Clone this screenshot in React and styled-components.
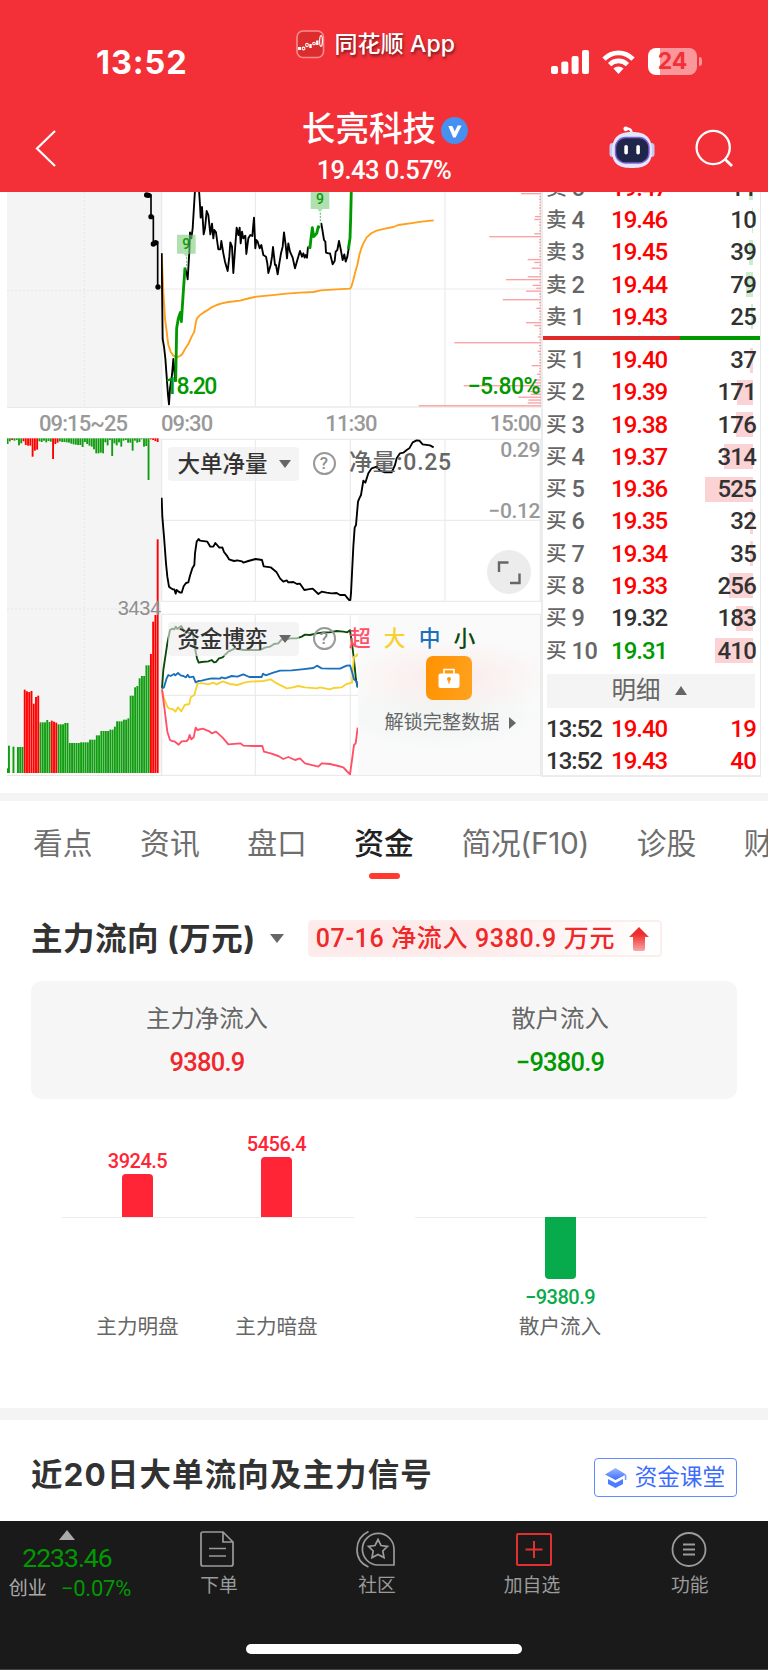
import React from 'react';
import styled, { createGlobalStyle } from 'styled-components';

const Global = createGlobalStyle`
  * { box-sizing: border-box; }
  body {
    margin: 0;
    background: #fff;
    font-family: Roboto, 'Noto Sans CJK SC', sans-serif;
    color: #323232;
  }
`;

const C = { red: '#f33038', up: '#ff0000', down: '#009900', grey: '#666', light: '#999', ink: '#323232' };
const SF = `Inter, 'Noto Sans CJK SC', sans-serif`;

const Page = styled.div`
  width: 768px;
  height: 1670px;
  overflow: hidden;
  display: flex;
  flex-direction: column;
`;

/* ---------- header ---------- */
const Header = styled.header`
  height: 192px;
  flex: none;
  background: ${C.red};
  color: #fff;
  display: flex;
  flex-direction: column;
`;
const StatusBar = styled.div`
  height: 96px;
  display: grid;
  grid-template-columns: 296px 1fr 218px;
  align-items: start;
`;
const Clock = styled.div`
  padding: 43px 0 0 96px;
  font: 700 32.5px/40px ${SF};
  letter-spacing: 0.9px;
`;
const Source = styled.div`
  display: flex;
  align-items: center;
  gap: 9.5px;
  padding-top: 28px;
  height: 60px;
  font: 500 23px/32px ${SF};
  text-shadow: 1px 2px 3px rgba(0, 0, 0, 0.55);
  white-space: nowrap;
  span { letter-spacing: 0.1px; }
`;
const Signals = styled.div`
  display: flex;
  align-items: center;
  gap: 13px;
  padding: 48px 0 0 1px;
`;
const Battery = styled.div`
  width: 49px;
  height: 27px;
  border-radius: 8px;
  background: linear-gradient(90deg, #fff 24%, #f9979b 24%);
  color: ${C.red};
  font: 700 23px/27px ${SF};
  text-align: center;
`;
const Nub = styled.i`
  width: 3px;
  height: 9px;
  margin-left: -11px;
  border-radius: 0 3px 3px 0;
  background: #f9979b;
`;
const NavBar = styled.div`
  flex: 1;
  display: grid;
  grid-template-columns: 280px 1fr 280px;
`;
const NavLeft = styled.div`
  padding: 34px 0 0 35px;
`;
const NavRight = styled.div`
  display: flex;
  justify-content: flex-end;
  align-items: flex-start;
  gap: 40px;
  padding: 29px 34px 0 0;
`;
const Title = styled.div`
  display: flex;
  flex-direction: column;
  align-items: center;
  padding-top: 13px;
`;
const Name = styled.div`
  display: flex;
  align-items: center;
  gap: 5px;
  height: 42px;
  margin-left: 2px;
  font-size: 33.6px;
  font-weight: 500;
  line-height: 42px;
`;
const Quote = styled.div`
  font-size: 25.5px;
  line-height: 30px;
  margin-top: 4px;
  letter-spacing: -0.55px;
  font-weight: 500;
`;

/* ---------- market ---------- */
const Market = styled.section`
  display: flex;
  height: 601px;
  flex: none;
  padding-left: 7px;
`;
const Charts = styled.div`
  display: flex;
  width: 536px;
  height: 585px;
  border-right: 2px solid #ececec;
`;
const Auction = styled.div`
  width: 154px;
  position: relative;
`;
const Minute = styled.div`
  width: 380px;
`;
const Plot = styled.svg`
  display: block;
  width: 100%;
  height: ${(p) => p.$h}px;
  background: ${(p) => p.$bg || '#fff'};
`;
const Times = styled.div`
  height: 30px;
  display: flex;
  justify-content: ${(p) => p.$justify || 'space-between'};
  padding-left: ${(p) => p.$pad || 0}px;
  color: ${C.light};
  font-size: 22px;
  font-weight: 500;
  line-height: 31px;
  letter-spacing: -0.9px;
`;
const Panel = styled.div`
  position: relative;
  height: ${(p) => p.$h}px;
  margin-bottom: ${(p) => p.$mb || 0}px;
`;
const Over = styled.div`
  position: absolute;
  white-space: nowrap;
  left: ${(p) => p.$x}px;
  top: ${(p) => p.$y}px;
  height: ${(p) => p.$lh || 30}px;
  line-height: ${(p) => p.$lh || 30}px;
  font-size: ${(p) => p.$size || 22}px;
  color: ${(p) => p.$color || C.grey};
  font-weight: ${(p) => p.$weight || 400};
  letter-spacing: ${(p) => p.$ls || 0}px;
`;
const RightScale = styled(Over)`
  left: auto;
  right: 1px;
`;
const VolumeMark = styled(Over)`
  left: auto;
  right: 0;
  font-family: 'Liberation Sans', sans-serif;
`;
const Chip = styled.div`
  position: absolute;
  left: 7px;
  top: 8.5px;
  width: 131px;
  height: 34px;
  padding: 0 8px 0 9.5px;
  display: flex;
  align-items: center;
  justify-content: space-between;
  border-radius: 4px;
  background: rgba(236, 236, 236, 0.6);
  color: #333;
  font-size: 22.5px;
  font-weight: 500;
  line-height: 34px;
  white-space: nowrap;
`;
const Caret = styled.i`
  border: ${(p) => p.$w || 6}px solid transparent;
  border-top: ${(p) => p.$t || 8}px solid ${C.grey};
  border-bottom: 0;
`;
const CaretUp = styled.i`
  border: ${(p) => p.$w || 6}px solid transparent;
  border-bottom: ${(p) => p.$t || 9}px solid ${(p) => p.$c || C.grey};
  border-top: 0;
`;
const Help = styled.div`
  position: absolute;
  left: 151.5px;
  top: 14px;
  width: 23px;
  height: 23px;
  border: 2px solid #999;
  border-radius: 50%;
  color: #8c8c8c;
  font-size: 17px;
  font-weight: 500;
  line-height: 19px;
  text-align: center;
`;
const Expand = styled.div`
  position: absolute;
  left: 326px;
  top: 112px;
  width: 44px;
  height: 44px;
  border-radius: 50%;
  background: #ececec;
`;
const Legend = styled.div`
  position: absolute;
  left: 188px;
  top: 10px;
  display: flex;
  gap: 13px;
  font-size: 21.8px;
  line-height: 32px;
  font-weight: 500;
`;
const LegendItem = styled.span`
  color: ${(p) => p.$c};
`;
const Locked = styled.div`
  position: absolute;
  left: 197px;
  top: 2px;
  width: 182px;
  height: 160px;
  padding-top: 41px;
  display: flex;
  flex-direction: column;
  align-items: center;
  background:
    radial-gradient(ellipse 105px 38px at 92px 62px, rgba(251, 234, 232, 0.95), rgba(251, 234, 232, 0)),
    radial-gradient(ellipse 115px 36px at 80px 100px, rgba(238, 244, 242, 0.95), rgba(238, 244, 242, 0)),
    #fafafa;
`;
const LockButton = styled.div`
  width: 46px;
  height: 44px;
  border-radius: 7px;
  background: linear-gradient(100deg, #ff9100, #ffa21f);
  display: flex;
  justify-content: center;
  align-items: center;
`;
const Unlock = styled.div`
  display: flex;
  align-items: center;
  gap: 9px;
  margin: 8px 0 0 2px;
  color: ${C.grey};
  font-size: 19.2px;
  line-height: 30px;
`;
const Play = styled.i`
  border: 6px solid transparent;
  border-left: 7px solid ${C.grey};
  border-right: 0;
`;

const Book = styled.div`
  width: 218px;
  height: 585px;
  overflow: hidden;
  display: flex;
  flex-direction: column;
  border-right: 1px solid #e8e8e8;
  border-bottom: 2px solid #ececec;
`;
const Asks = styled.div`
  height: 144px;
  flex: none;
  display: flex;
  flex-direction: column;
  justify-content: flex-end;
  padding-bottom: 3px;
`;
const Bids = styled.div`
  padding-top: 4px;
`;
const Row = styled.div`
  height: 32.28px;
  flex: none;
  display: grid;
  grid-template-columns: 65px 1fr 80px;
  align-items: center;
  padding: 0 4px 0 3px;
  line-height: 32px;
  font-size: 24px;
  letter-spacing: -1px;
  color: ${C.ink};
`;
const Level = styled.span`
  display: flex;
  gap: 5px;
  color: ${C.grey};
  letter-spacing: 0;
  font-size: 20.6px;
  font-weight: 500;
`;
const LevelNo = styled.b`
  font-size: 23.5px;
  font-weight: 500;
  letter-spacing: -0.5px;
`;
const Price = styled.span`
  color: ${(p) => p.$c};
  font-weight: 500;
`;
const Qty = styled.span`
  text-align: right;
  font-weight: 500;
  letter-spacing: -0.8px;
  color: ${(p) => p.$c || C.ink};
  background: linear-gradient(${(p) => p.$bar}, ${(p) => p.$bar}) no-repeat right 3px center / ${(p) => p.$w || 0}px 25px;
`;
const Ratio = styled.div`
  height: 4px;
  flex: none;
  background: linear-gradient(90deg, #e02a2a 63%, ${C.down} 63%);
`;
const DetailBar = styled.div`
  height: 34px;
  margin: 7px 5px 5px 4px;
  padding-right: 4px;
  display: flex;
  justify-content: center;
  align-items: center;
  gap: 14px;
  background: #f4f4f4;
  color: ${C.grey};
  font-size: 24.5px;
  line-height: 34px;
`;

/* ---------- tabs ---------- */
const Divider = styled.div`
  height: ${(p) => p.$h}px;
  flex: none;
  background: #f4f4f4;
`;
const Tabs = styled.nav`
  height: 88px;
  flex: none;
  display: flex;
  gap: 47.5px;
  padding: 20px 0 0 33px;
  overflow: hidden;
  white-space: nowrap;
`;
const Tab = styled.div`
  display: flex;
  flex-direction: column;
  align-items: center;
  gap: 8px;
  flex: none;
  font-family: ${SF};
  font-size: 29.8px;
  line-height: 44px;
  letter-spacing: ${(p) => p.$ls || 0}px;
  font-weight: ${(p) => (p.$on ? 500 : 400)};
  color: ${(p) => (p.$on ? '#222' : '#6e6e6e')};
  &::after {
    content: '';
    width: 31px;
    height: 6px;
    border-radius: 3px;
    background: ${(p) => (p.$on ? '#ff3b30' : 'transparent')};
  }
`;

/* ---------- capital flow ---------- */
const Flow = styled.section`
  height: 519px;
  flex: none;
  padding: 31px 31px 0;
`;
const FlowHead = styled.div`
  display: flex;
  align-items: center;
  height: 37px;
`;
const H2 = styled.h2`
  margin: 0;
  font: 700 31.5px/40px ${SF};
  letter-spacing: ${(p) => p.$ls || 0}px;
  color: #323232;
  white-space: nowrap;
`;
const FlowTag = styled.div`
  margin-left: 24px;
  width: 354px;
  height: 37px;
  padding: 0 11px 0 6px;
  display: flex;
  align-items: center;
  justify-content: space-between;
  border: 2px solid #fdeeee;
  border-radius: 4px;
  background: linear-gradient(90deg, #fdeaea 45%, #fff);
  color: #f02828;
  font-size: 25px;
  font-weight: 500;
  line-height: 33px;
  letter-spacing: 0.65px;
  white-space: nowrap;
`;
const Summary = styled.div`
  margin-top: 24px;
  height: 118px;
  border-radius: 11px;
  background: #f6f6f6;
  display: grid;
  grid-template-columns: 1fr 1fr;
`;
const Cell = styled.div`
  display: flex;
  flex-direction: column;
  align-items: center;
  padding: 21px 1px 0 0;
  font-size: 24.4px;
  line-height: 34px;
  color: ${C.grey};
`;
const CellValue = styled.div`
  margin-top: 9px;
  font-size: 25.5px;
  font-weight: 500;
  line-height: 34px;
  letter-spacing: -0.8px;
  color: ${(p) => p.$c};
`;
const Bars = styled.div`
  display: grid;
  grid-template-columns: 292px 292px;
  gap: 61px;
  padding: 0 31px;
  height: 270px;
`;
const BarGroup = styled.div`
  display: flex;
  justify-content: center;
  gap: ${(p) => p.$gap || 0}px;
  padding-right: ${(p) => p.$pr || 0}px;
  background: linear-gradient(#ececec, #ececec) no-repeat 0 118px / 100% 1px;
`;
const BarItem = styled.div`
  width: 110px;
  display: flex;
  flex-direction: column;
  align-items: center;
  color: ${(p) => p.$c};
`;
const Half = styled.div`
  height: ${(p) => p.$h}px;
  display: flex;
  flex-direction: column;
  align-items: center;
  justify-content: ${(p) => (p.$down ? 'flex-start' : 'flex-end')};
`;
const Bar = styled.div`
  width: 31px;
  background: currentColor;
  border-radius: ${(p) => (p.$down ? '0 0 4px 4px' : '4px 4px 0 0')};
`;
const BarValue = styled.div`
  font-size: 20px;
  font-weight: 500;
  line-height: 26px;
  letter-spacing: -0.5px;
  margin-top: ${(p) => p.$mt || 0}px;
`;
const BarName = styled.div`
  font-size: 20.6px;
  line-height: 30px;
  color: ${C.grey};
  white-space: nowrap;
`;

/* ---------- signal ---------- */
const Signal = styled.section`
  height: 101px;
  flex: none;
  padding: 16px 31px 0;
  display: flex;
  align-items: flex-start;
  justify-content: space-between;
`;
const SignalTitle = styled.div`
  padding-top: 19px;
`;
const Course = styled.button`
  width: 143px;
  height: 39px;
  margin-top: 22px;
  padding: 0 11px 0 10px;
  display: flex;
  align-items: center;
  justify-content: space-between;
  border: 1px solid #5f8dff;
  border-radius: 4px;
  background: #fff;
  color: #3c6cff;
  font: 400 22.6px/36px Roboto, 'Noto Sans CJK SC', sans-serif;
  white-space: nowrap;
`;

/* ---------- bottom bar ---------- */
const Bottom = styled.footer`
  height: 149px;
  flex: none;
  background: #1a1a1a;
  border-bottom: 1px solid #444;
  display: flex;
  flex-direction: column;
  align-items: center;
  justify-content: space-between;
  padding-bottom: 15px;
`;
const BottomRow = styled.div`
  width: 768px;
  display: grid;
  grid-template-columns: 141px 156px 160px 150px 161px;
`;
const IndexBox = styled.div`
  display: flex;
  flex-direction: column;
  align-items: center;
  padding: 9px 7px 0 0;
  color: ${C.down};
`;
const IndexValue = styled.div`
  font-size: 26.5px;
  font-weight: 400;
  line-height: 34px;
  margin-top: 1px;
  letter-spacing: -1px;
`;
const IndexLine = styled.div`
  display: flex;
  gap: 14px;
  font-size: 22px;
  font-weight: 400;
  line-height: 28px;
  margin: -2px 0 0 6px;
  letter-spacing: -0.2px;
  align-items: center;
  white-space: nowrap;
  small { font-size: 19px; color: #aaa; letter-spacing: 0; line-height: 32px; }
`;
const Item = styled.div`
  display: flex;
  flex-direction: column;
  align-items: center;
  padding-top: 9px;
  color: #9b9b9b;
  font-size: 18.8px;
  line-height: 28px;
  svg { display: block; margin: 0 0 4px ${(p) => p.$shift || 0}px; }
`;
const HomeBar = styled.div`
  width: 276px;
  height: 10px;
  border-radius: 5px;
  background: #fff;
`;

/* ---------- data ---------- */
const asks = [
  ['5', '19.47', 11, 4], ['4', '19.46', 10, 1], ['3', '19.45', 39, 4],
  ['2', '19.44', 79, 7], ['1', '19.43', 25, 2],
];
const bids = [
  ['1', '19.40', 37, 3], ['2', '19.39', 171, 16], ['3', '19.38', 176, 17], ['4', '19.37', 314, 29],
  ['5', '19.36', 525, 48], ['6', '19.35', 32, 3], ['7', '19.34', 35, 3], ['8', '19.33', 256, 24],
  ['9', '19.32', 183, 17, C.ink], ['10', '19.31', 410, 38, C.down],
];

const priceA = '35,205 38,462 42,485 46,520 50,575 54,630 57,658 60,610 66,570 70,522 76,590';
const rallyA = '77,590 80,430 85,400 91,382 94,410 100,320 105,248';
const priceB = '105,248 111,270 113,283 118,200 120,142 124,160 128,130 135,15 147,15 150,60 152,98 156,66 161,148 165,130 170,78 175,90 181,148 186,116 190,160 193,135 198,142 201,165 205,193 211,193 214,168 220,205 225,230 233,258 238,215 241,172 246,185 250,264 256,180 260,128 265,150 269,128 272,175 276,140 280,160 286,152 289,207 295,160 301,150 307,153 309,130 312,98 316,190 319,165 323,170 329,190 334,180 340,210 348,215 352,235 355,264 362,240 366,215 369,186 375,240 378,240 383,268 388,235 393,205 398,185 402,142 407,180 411,220 415,175 420,200 428,218 435,250 442,225 450,198 456,215 460,205 464,218 467,210 471,218 474,185';
const rallyB = '474,185 480,188 483,160 487,128 491,155 500,145 505,125 510,128';
const priceC = '512,118 514,116 518,140 522,165 526,170 528,203 535,205 540,205 548,238 554,228 557,200 562,195 567,168 572,192 578,225 583,208 587,230 592,215 596,190';
const rallyC = '595,192 600,160 602,100 604,15';
const average = '35,205 40,320 45,400 50,440 55,480 62,500 70,512 80,517 90,513 97,507 105,492 115,477 125,455 133,440 137,415 141,400 150,390 160,383 170,377 183,368 200,360 215,355 235,351 270,347 300,339 320,335 360,331 410,326 450,323 490,321 512,316 560,313 600,311 604,305 610,285 616,260 622,240 628,210 634,190 640,175 650,157 665,144 680,137 705,131 730,126 745,120 780,115 815,110 851,106';
const netLine = '35,203 37,260 42,320 48,400 52,440 57,470 62,474 68,478 73,478 77,491 80,480 86,485 91,488 95,488 101,469 108,459 115,457 120,437 127,415 133,405 135,370 140,335 146,327 150,332 172,335 181,350 190,350 196,339 208,353 217,352 222,366 230,376 237,388 252,393 262,391 276,394 280,398 295,393 317,387 336,390 341,409 362,412 380,427 390,445 400,455 410,451 415,457 430,456 441,462 450,461 463,480 474,478 488,476 505,492 515,485 530,488 545,490 560,489 570,495 585,495 593,505 597,510 601,510 603,490 606,430 610,350 614,293 618,285 621,250 624,215 628,205 633,195 640,152 646,158 655,130 665,115 680,110 690,122 705,127 725,127 735,105 740,85 750,70 760,68 770,60 778,55 788,37 800,31 808,32 818,43 840,46 851,52';
const games = [
  ['#0a4a0a', '36,265 40,210 46,170 52,130 60,90 67,86 73,88 77,80 82,87 88,82 94,78 100,90 110,95 120,100 128,95 136,150 141,175 146,188 155,186 175,184 185,180 192,187 198,186 207,175 218,172 223,166 235,155 255,145 280,150 310,150 330,150 345,143 360,140 372,132 385,130 395,118 405,120 420,115 440,115 455,110 465,104 480,105 500,100 520,97 540,97 560,93 580,95 592,97 600,91 606,130 612,180 618,240 623,262'],
  ['#f8d12f', '36,268 42,295 52,320 58,326 68,327 76,335 84,322 94,334 104,315 118,312 122,292 133,285 143,250 160,250 175,253 190,248 200,253 218,244 240,252 262,255 285,247 300,245 340,243 362,238 375,247 400,260 410,265 425,263 445,258 465,262 500,265 510,262 525,265 540,268 550,264 575,262 590,252 606,248 608,215 612,170 620,168 623,160'],
  ['#ff5068', '36,268 44,330 52,395 60,420 66,423 75,425 86,434 95,424 110,423 115,418 119,405 124,418 131,412 137,383 142,390 158,386 178,394 185,400 198,395 218,413 235,433 272,430 280,437 310,438 337,438 342,455 362,460 385,468 400,477 415,471 435,480 450,475 465,490 505,500 515,490 540,492 565,498 580,502 590,513 600,523 606,480 612,435 617,430 623,383'],
  ['#1a70bd', '36,265 42,262 50,235 55,225 62,228 72,222 76,226 84,219 92,226 100,228 108,232 113,224 118,232 130,230 137,247 145,243 155,242 170,238 185,235 210,236 215,232 225,235 245,228 262,230 280,223 298,231 335,231 339,221 347,226 370,218 390,212 425,211 455,208 490,204 501,197 515,205 540,206 570,206 590,197 600,196 606,215 612,238 620,245 623,262'],
];

const spikes = { 0: 60, 8: 18, 9: 20, 14: 20, 15: 155, 23: 40, 24: 20, 26: 28, 29: 40, 30: 105, 32: 25, 33: 14, 34: 45, 37: 115, 40: 14, 45: 45, 46: 20, 50: 10, 52: 260, 55: 10, 60: 28, 63: 12, 65: 20, 66: 18, 67: 232, 68: 24, 69: 34, 70: 30, 71: 68, 72: 38, 73: 40, 74: 367 };
const profile = Array.from({ length: 75 }, (_, k) => [25 + 8.6 * k, spikes[k] || 4 + (k % 3)]);

const G = '#109e10';
const R = '#ff0000';
const volumeSteps = [
  [30, 947, G], [37, 0, G], [44, 950, G], [51, 0, G], [71, 951, G], [78, 779, R], [85, 784, R], [92, 786, R],
  [98, 783, R], [105, 821, R], [112, 801, R], [119, 797, R], [139, 877, G], [146, 870, G], [152, 876, G],
  [159, 872, R], [166, 875, R], [173, 878, R], [194, 883, G], [207, 879, G], [240, 939, G], [265, 937, G],
  [286, 929, G], [299, 916, G], [326, 903, G], [340, 899, G], [347, 890, G], [367, 874, G], [381, 869, G],
  [388, 865, G], [402, 797, G], [409, 772, G], [415, 768, G], [422, 745, G], [436, 738, G], [450, 706, G],
  [456, 672, R], [463, 575, R], [470, 555, R], [478, 328, R],
];
const volumes = Array.from({ length: 67 }, (_, i) => {
  const x = 24 + i * 6.76;
  const [, top, color] = volumeSteps.find(([end]) => x + 3 < end) || [0, 0, G];
  return { x, top, color };
}).filter((v) => v.top);
const unmatched = [
  42, 34, -30, 32, 30, 46, 40, -34, -45, -47, -47, -80, -62, -59, 34, 36, 32, 37, 33, 35, -87, -42, -38, 34, 36, 36,
  37, 38, 41, 43, 44, 45, 45, 51, 36, 42, 47, 50, 58, 70, 70, 68, 70, 37, 46, 30, 78, 40, 46, 37, 50, 32, 30, 38, 38,
  62, 32, 38, 36, 28, 50, 48, 150, -28, -30, -33, -36,
];

/* ---------- drawings ---------- */
const Line = ({ pts, c = '#000', w = 5.6 }) => (
  <polyline points={pts} fill="none" stroke={c} strokeWidth={w} strokeLinejoin="round" />
);

const Grid = ({ top, mid, bottom }) => (
  <g stroke="#ebebeb" strokeWidth="4" fill="none">
    <path d={`M33 ${mid}H1173M316 ${top}V${bottom}M601 ${top}V${bottom}M885 ${top}V${bottom}`} strokeWidth="3.5" />
    <path d={`M35 ${top}V${bottom}H1171V${top}Z`} />
  </g>
);

const Nine = ({ x, y, tail }) => (
  <g>
    <path d={`M${x} ${y}h56v57h-20l-8 10l-8 -10h-20z`} fill="#7cc97c" fillOpacity="0.6" />
    <path d={`M${x + 29} ${y + 68}V${tail}`} stroke="#6fc26f" strokeWidth="3.5" strokeDasharray="6 4" />
    <text x={x + 28} y={y + 43} textAnchor="middle" fontSize="42" fontWeight="500" fontFamily="Roboto" fill="#0a9a0a">9</text>
  </g>
);

const PriceChart = () => (
  <Plot $h={216} viewBox="33 21 1140 648">
    <Grid top={0} mid={312} bottom={666} />
    {profile.map(([y, w]) => <rect key={y} x={1173 - w} y={y - 1} width={w} height="4" fill="#fba0a3" />)}
    <Line pts={average} c="#ff9f1a" />
    <Line pts={priceA} />
    <Line pts={priceB} />
    <Line pts={priceC} />
    <Line pts={rallyA} c="#009a00" w={8.5} />
    <Line pts={rallyB} c="#009a00" w={8.5} />
    <Line pts={rallyC} c="#009a00" w={8.5} />
    <Nine x={81} y={149} tail={248} />
    <Nine x={482} y={15} tail={120} />
  </Plot>
);

const AuctionPrice = () => (
  <Plot $h={216} $bg="#f4f4f4" viewBox="21 21 462 648">
    <path d="M253 21V669M21 317H483" stroke="#e6e6e6" strokeWidth="3" strokeDasharray="6 6" />
    <path d="M21 669H483" stroke="#e6e6e6" strokeWidth="4" />
    <path d="M440 30H453V95H460V175L473 172V305" fill="none" stroke="#000" strokeWidth="5" />
    {[[440, 30], [446, 31], [453, 95], [460, 177], [467, 173], [474, 306]].map(([x, y]) => (
      <circle key={y} cx={x} cy={y} r="8" />
    ))}
  </Plot>
);

const AuctionVolume = () => (
  <Plot $h={338} $bg="#f4f4f4" viewBox="21 24 462 1014">
    <path d="M253 24V1030M21 537H483" stroke="#e6e6e6" strokeWidth="3" strokeDasharray="6 6" />
    {unmatched.map((v, i) => (
      <rect key={i} x={20 + i * 6.82} y="25" width="5.6" height={Math.abs(v) - 25} fill={v < 0 ? R : G} />
    ))}
    <rect x="21" y="1015" width="3" height="14" fill={G} />
    {volumes.map((v) => <rect key={v.x} x={v.x} y={v.top} width="5.7" height={1029 - v.top} fill={v.color} />)}
    <rect x="21" y="1030" width="462" height="8" fill="#fff" />
    <path d="M21 1037H483" stroke="#e6e6e6" strokeWidth="5" />
  </Plot>
);

const AppLogo = () => (
  <svg width="29" height="29" viewBox="0 0 29 29">
    <rect x="1" y="1" width="26.5" height="26.5" rx="6" fill="#dd2c2e" stroke="#f78c8f" strokeWidth="1.6" />
    <path d="M2 18.5h3" stroke="#fff" strokeWidth="3" />
    <path d="M14.5 14v4M21.3 10.5v4.5" stroke="#fff" strokeWidth="2.4" />
    <g fill="none" stroke="#fff" strokeWidth="1.1">
      <circle cx="7.5" cy="18.5" r="1.4" /><ellipse cx="11" cy="15" rx="1.3" ry="1.8" /><circle cx="18" cy="13.5" r="1.3" />
      <ellipse cx="25" cy="11" rx="1.4" ry="5.4" />
    </g>
  </svg>
);

const Cellular = () => (
  <svg width="38" height="25" viewBox="0 0 38 25" fill="#fff">
    <rect x="0" y="17" width="7" height="8" rx="2" /><rect x="10.3" y="12.5" width="7" height="12.5" rx="2" />
    <rect x="20.6" y="7" width="7" height="18" rx="2" /><rect x="31" y="1" width="7" height="24" rx="2" />
  </svg>
);

const Wifi = () => (
  <svg width="33" height="24" viewBox="0 0 33 24" fill="none" stroke="#fff" strokeWidth="4.6">
    <path d="M2 9.2C10 .8 23 .8 31 9.2" />
    <path d="M7.6 14.6C12.6 9.6 20.4 9.6 25.4 14.6" />
    <path d="M16.5 24L11.4 18.6C14.4 15.8 18.6 15.8 21.6 18.6Z" fill="#fff" stroke="none" />
  </svg>
);

const Verified = () => (
  <svg width="27" height="27" viewBox="0 0 27 27">
    <circle cx="13.5" cy="13.5" r="13.4" fill="#4690f0" />
    <path d="M7.3 9H11.3L13.8 14.5L16.6 8.6H20.6L14.6 20.5H12.2Z" fill="#fff" />
  </svg>
);

const Robot = () => (
  <svg width="46" height="44" viewBox="0 0 46 44">
    <path d="M22.5 8C22.5 3 18 3.5 16.5 4.2" fill="none" stroke="#fff" strokeWidth="2.4" />
    <circle cx="16.8" cy="3.8" r="2.4" fill="#fff" />
    <rect x="0.5" y="18" width="6" height="14" rx="3" fill="#c6c8ef" />
    <rect x="39.5" y="18" width="6" height="14" rx="3" fill="#c6c8ef" />
    <path d="M3 26C3 12 10 7 23 7S43 12 43 26S35 43 23 43S3 40 3 26Z" fill="#e6e6fb" />
    <rect x="6.5" y="12.5" width="33.5" height="25.5" rx="10" fill="#20264a" stroke="#7c63d8" strokeWidth="1.4" />
    <rect x="15.3" y="20" width="3.6" height="9.5" rx="1.8" fill="#fff" />
    <rect x="27.3" y="20" width="3.6" height="9.5" rx="1.8" fill="#fff" />
  </svg>
);

const MagnifierIcon = styled.svg`
  margin-top: 4px;
`;
const Magnifier = () => (
  <MagnifierIcon width="39" height="39" viewBox="0 0 39 39" fill="none" stroke="#fff" strokeWidth="2.3">
    <circle cx="18.2" cy="18.5" r="16.6" /><path d="M30.3 30.5L37 37" strokeWidth="2.8" />
  </MagnifierIcon>
);

const HeadCaret = styled(Caret)`
  margin-left: 14px;
`;

const Level10 = ({ side, rows, bar }) => rows.map(([n, price, qty, w, c]) => (
  <Row key={n}>
    <Level>{side}<LevelNo>{n}</LevelNo></Level>
    <Price $c={c || C.up}>{price}</Price>
    <Qty $w={w} $bar={bar}>{qty}</Qty>
  </Row>
));

export default function App() {
  return (
    <Page>
      <Global />
      <Header>
        <StatusBar>
          <Clock>13:52</Clock>
          <Source><AppLogo /><span>同花顺 App</span></Source>
          <Signals><Cellular /><Wifi /><Battery>24</Battery><Nub /></Signals>
        </StatusBar>
        <NavBar>
          <NavLeft>
            <svg width="21" height="37" viewBox="0 0 21 37" fill="none" stroke="#fff" strokeWidth="2.2"><path d="M20 1L2 18.5L20 36" /></svg>
          </NavLeft>
          <Title>
            <Name>长亮科技<Verified /></Name>
            <Quote>19.43 0.57%</Quote>
          </Title>
          <NavRight><Robot /><Magnifier /></NavRight>
        </NavBar>
      </Header>

      <Market>
        <Charts>
          <Auction>
            <AuctionPrice />
            <Times $pad={32}>09:15~25</Times>
            <AuctionVolume />
            <VolumeMark $x={0} $y={401} $size={20} $color="#8f8f8f" $ls={-0.3}>3434</VolumeMark>
          </Auction>
          <Minute>
            <Panel $h={216}>
              <PriceChart />
              <Over $x={4} $y={180} $size={23} $color={C.down} $weight={500} $ls={-1.6}>18.20</Over>
              <RightScale $y={180} $size={23} $color={C.down} $weight={500} $ls={-0.5}>−5.80%</RightScale>
            </Panel>
            <Times><span>09:30</span><span>11:30</span><span>15:00</span></Times>
            <Panel $h={164} $mb={11}>
              <Plot $h={164} viewBox="33 24 1140 492">
                <Grid top={28} mid={271} bottom={514} />
                <Line pts={netLine} />
              </Plot>
              <Chip>大单净量<Caret /></Chip>
              <Help>?</Help>
              <Over $x={188} $y={10} $size={23} $weight={500} $ls={0.75}>净量:0.25</Over>
              <RightScale $y={-3} $size={21} $color={C.light} $weight={500} $ls={-0.5}>0.29</RightScale>
              <RightScale $y={58} $size={21} $color={C.light} $weight={500} $ls={-0.4}>−0.12</RightScale>
              <Expand>
                <svg width="44" height="44" viewBox="0 0 44 44" fill="none" stroke="#666" strokeWidth="2.4"><path d="M12 22V12.5H21.5M23 33H32.5V23.5" /></svg>
              </Expand>
            </Panel>
            <Panel $h={164}>
              <Plot $h={164} viewBox="33 39 1140 492">
                <Grid top={43} mid={286} bottom={526} />
                {games.map(([c, pts]) => <Line key={c} pts={pts} c={c} />)}
              </Plot>
              <Chip>资金博弈<Caret /></Chip>
              <Locked>
                <LockButton>
                  <svg width="22" height="20" viewBox="0 0 22 20"><path d="M6 7V1.5H16V7" fill="none" stroke="#fff" strokeWidth="1.6" /><rect x="0.5" y="5.5" width="21" height="14.5" rx="2" fill="#fff" /><circle cx="11" cy="11" r="2" fill="#ff9808" /><path d="M10.3 11H11.7V15.5H10.3Z" fill="#ff9808" /></svg>
                </LockButton>
                <Unlock>解锁完整数据<Play /></Unlock>
              </Locked>
              <Help>?</Help>
              <Legend>
                <LegendItem $c="#ff5068">超</LegendItem>
                <LegendItem $c="#f8d12f">大</LegendItem>
                <LegendItem $c="#1a70bd">中</LegendItem>
                <LegendItem $c="#0a4a0a">小</LegendItem>
              </Legend>
            </Panel>
          </Minute>
        </Charts>
        <Book>
          <Asks><Level10 side="卖" rows={asks} bar="#cdebcd" /></Asks>
          <Ratio />
          <Bids><Level10 side="买" rows={bids} bar="#fbd3d5" /></Bids>
          <DetailBar>明细<CaretUp /></DetailBar>
          <Row><Price $c={C.ink}>13:52</Price><Price $c={C.up}>19.40</Price><Qty $c={C.up} $bar="transparent">19</Qty></Row>
          <Row><Price $c={C.ink}>13:52</Price><Price $c={C.up}>19.43</Price><Qty $c={C.up} $bar="transparent">40</Qty></Row>
        </Book>
      </Market>

      <Divider $h={8} />
      <Tabs>
        <Tab>看点</Tab><Tab>资讯</Tab><Tab>盘口</Tab><Tab $on>资金</Tab><Tab $ls={-0.3}>简况(F10)</Tab><Tab>诊股</Tab><Tab>财务</Tab>
      </Tabs>

      <Flow>
        <FlowHead>
          <H2 $ls={0.5}>主力流向 (万元)</H2>
          <HeadCaret $w={7.5} $t={9} />
          <FlowTag>
            <span>07-16 净流入 9380.9 万元</span>
            <svg width="20" height="24" viewBox="0 0 20 24">
              <defs><linearGradient id="up" x2="0" y2="1"><stop offset="0.3" stopColor="#ee2e2e" /><stop offset="1" stopColor="#f9a5a5" /></linearGradient></defs>
              <path d="M10 0L20 10H16V22Q16 24 14 24H6Q4 24 4 22V10H0Z" fill="url(#up)" />
            </svg>
          </FlowTag>
        </FlowHead>
        <Summary>
          <Cell>主力净流入<CellValue $c="#f0282d">9380.9</CellValue></Cell>
          <Cell>散户流入<CellValue $c={C.down}>−9380.9</CellValue></Cell>
        </Summary>
        <Bars>
          <BarGroup $gap={29} $pr={2}>
            <BarItem $c="#ff2436">
              <Half $h={118}><BarValue>3924.5</BarValue><Bar style={{ height: 43 }} /></Half>
              <Half $down $h={95} />
              <BarName>主力明盘</BarName>
            </BarItem>
            <BarItem $c="#ff2436">
              <Half $h={118}><BarValue>5456.4</BarValue><Bar style={{ height: 60 }} /></Half>
              <Half $down $h={95} />
              <BarName>主力暗盘</BarName>
            </BarItem>
          </BarGroup>
          <BarGroup $pr={2}>
            <BarItem $c="#08ab4b">
              <Half $h={118} />
              <Half $down $h={95}><Bar $down style={{ height: 62 }} /><BarValue $mt={5}>−9380.9</BarValue></Half>
              <BarName>散户流入</BarName>
            </BarItem>
          </BarGroup>
        </Bars>
      </Flow>

      <Divider $h={12} />
      <Signal>
        <SignalTitle><H2 $ls={1.1}>近20日大单流向及主力信号</H2></SignalTitle>
        <Course>
          <svg width="22" height="20" viewBox="0 0 22 20">
            <defs><linearGradient id="cap" x2="0" y2="1"><stop stopColor="#9db9ff" /><stop offset="1" stopColor="#3c6cff" /></linearGradient></defs>
            <path d="M10.5 0L21 6.5L10.5 12L0 6.5Z" fill="url(#cap)" /><path d="M3 11L10.5 15L18 11V16L10.5 20L3 16Z" fill="#4f7dff" /><path d="M20.6 7V12" stroke="#7d9fff" strokeWidth="1.6" />
          </svg>
          资金课堂
        </Course>
      </Signal>

      <Bottom>
        <BottomRow>
          <IndexBox>
            <CaretUp $w={8.5} $t={10} $c="#aaa" />
            <IndexValue>2233.46</IndexValue>
            <IndexLine><small>创业</small>−0.07%</IndexLine>
          </IndexBox>
          <Item $shift={-4}>
            <svg width="34" height="38" viewBox="0 0 34 38" fill="none" stroke="#9b9b9b" strokeWidth="1.7"><path d="M3 2H23L33 12V34Q33 36 31 36H3Q1 36 1 34V4Q1 2 3 2ZM23 2V12H33M9 18.5H26M9 26H26" /></svg>
            下单
          </Item>
          <Item $shift={-3}>
            <svg width="39" height="38" viewBox="0 0 39 38" fill="none" stroke="#9b9b9b" strokeWidth="1.7"><path d="M38 35H22A15.8 15.8 0 1 1 38 19.5ZM12.5 1.5Q1 7 1 19.5T12.5 37M22 9.5L25 15.5L31.5 16.4L26.8 21L28 27.6L22 24.5L16 27.6L17.2 21L12.5 16.4L19 15.5Z" /></svg>
            社区
          </Item>
          <Item $shift={4}>
            <svg width="36" height="38" viewBox="0 0 36 38" fill="none" stroke="#e03030" strokeWidth="2"><rect x="1" y="4" width="34" height="31" rx="1" /><path d="M9.5 19.5H26.5M18 11V28" /></svg>
            加自选
          </Item>
          <Item $shift={2}>
            <svg width="36" height="38" viewBox="0 0 36 38" fill="none" stroke="#9b9b9b" strokeWidth="1.8"><circle cx="18" cy="19.5" r="16.5" /><path d="M12 14.5H24M12 19.5H24M12 24.5H24" /></svg>
            <span>&nbsp;功能</span>
          </Item>
        </BottomRow>
        <HomeBar />
      </Bottom>
    </Page>
  );
}
